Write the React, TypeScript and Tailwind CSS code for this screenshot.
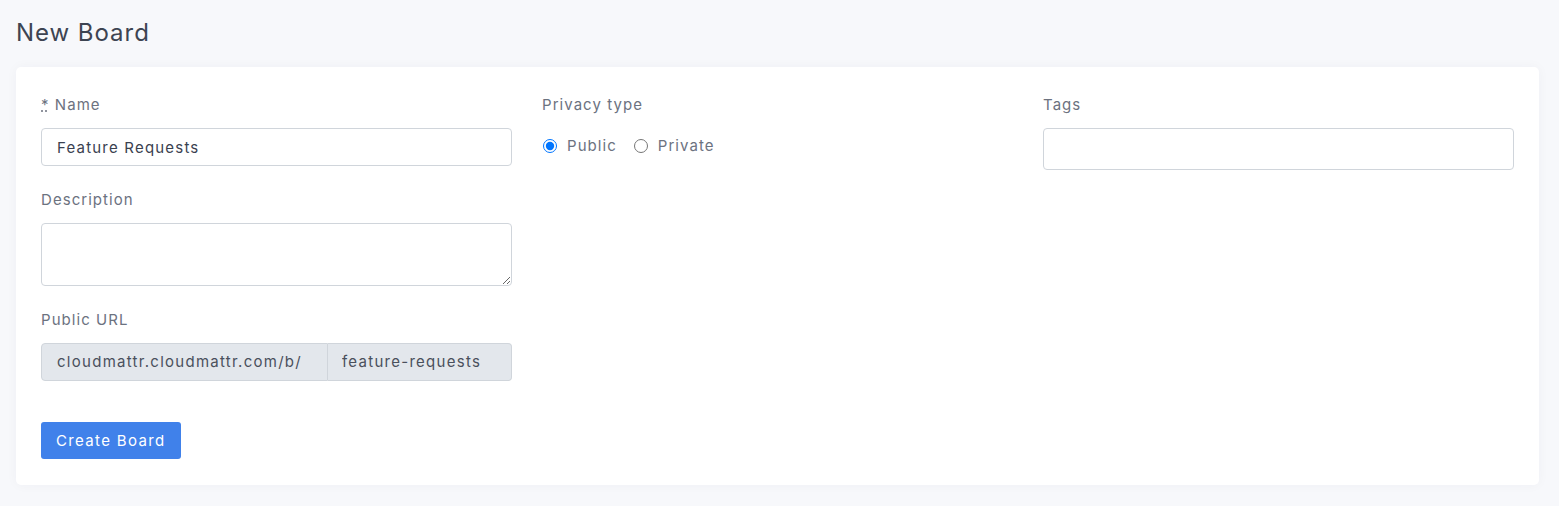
import React, { useState } from 'react';

const font = { fontFamily: 'Inter, "Open Sans", sans-serif' };

const Label: React.FC<{ children: React.ReactNode }> = ({ children }) => (
  <label className="block text-[15px] leading-[22px] pt-px tracking-[0.07em] text-[#6c727f] mb-[12px]">{children}</label>
);

export default function App() {
  const [name, setName] = useState('Feature Requests');
  const [privacy, setPrivacy] = useState<'public' | 'private'>('public');

  return (
    <div className="min-h-[506px] bg-[#f7f8fb] pl-4 pr-5 pt-[17px] pb-5" style={font}>
      <h1 className="text-[24px] leading-8 tracking-[0.04em] text-[#3d4452] mb-[18px]">New Board</h1>

      <div className="bg-white rounded-[5px] shadow-[0_0_12px_rgba(30,40,80,0.04)] px-[25px] pt-[26px] pb-[26px]">
        <div className="grid grid-cols-3 gap-[30px]">
          {/* left column */}
          <div>
            <Label>
              <span className="underline decoration-dotted">*</span> Name
            </Label>
            <input
              value={name}
              onChange={(e) => setName(e.target.value)}
              className="block w-full h-[38px] px-[15px] border border-[#d0d5db] rounded-[4px] text-[15px] tracking-[0.08em] text-[#3a4150] outline-none mb-[22px]"
            />

            <Label>Description</Label>
            <textarea className="block w-full h-[63px] px-[15px] py-2 border border-[#d0d5db] rounded-[4px] text-[15px] text-[#3a4150] outline-none mb-[22px]" />

            <Label>Public URL</Label>
            <div className="flex h-[38px] text-[15px] tracking-[0.085em] text-[#4a505c]">
              <div className="flex items-center pl-[15px] pr-[25px] bg-[#e3e7ec] border border-[#d0d5db] rounded-l-[4px] whitespace-nowrap">
                cloudmattr.cloudmattr.com/b/
              </div>
              <input
                readOnly
                value="feature-requests"
                className="flex-1 min-w-0 px-[14px] bg-[#e3e7ec] border border-l-0 border-[#d0d5db] rounded-r-[4px] text-[15px] tracking-[0.085em] text-[#4a505c] outline-none"
              />
            </div>

            <button className="mt-[41px] h-[37px] px-[15px] pt-px bg-[#4081ea] text-white text-[15px] tracking-[0.09em] rounded-[3px]">
              Create Board
            </button>
          </div>

          {/* middle column */}
          <div>
            <Label>Privacy type</Label>
            <div className="flex items-center h-[22px] mt-[19px] text-[15px] tracking-[0.07em] text-[#6c727f]">
              <label className="flex items-center mr-4">
                <input
                  type="radio"
                  name="privacy"
                  checked={privacy === 'public'}
                  onChange={() => setPrivacy('public')}
                  className="w-[14px] h-[14px] ml-px mr-[10px]"
                />
                Public
              </label>
              <label className="flex items-center">
                <input
                  type="radio"
                  name="privacy"
                  checked={privacy === 'private'}
                  onChange={() => setPrivacy('private')}
                  className="w-[14px] h-[14px] ml-px mr-[10px]"
                />
                Private
              </label>
            </div>
          </div>

          {/* right column */}
          <div>
            <Label>Tags</Label>
            <input className="block w-full h-[42px] px-[15px] border border-[#d0d5db] rounded-[4px] text-[15px] outline-none" />
          </div>
        </div>
      </div>
    </div>
  );
}
